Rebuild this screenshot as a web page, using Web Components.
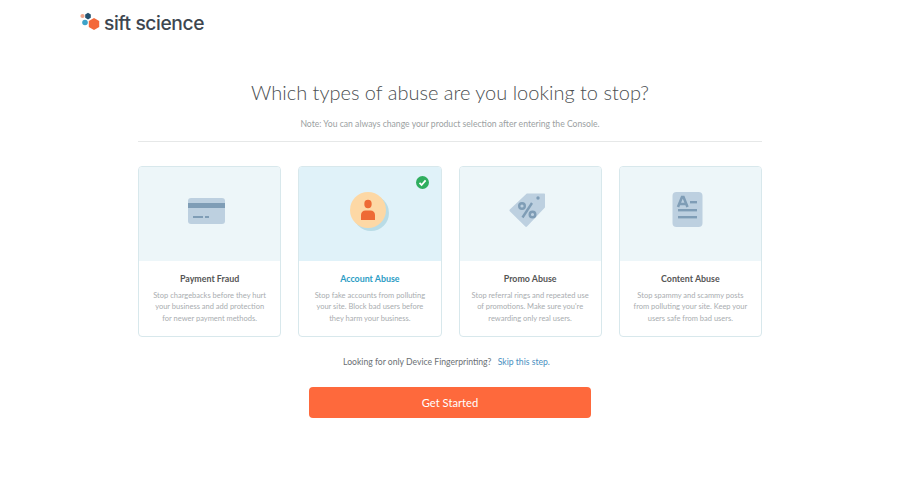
<!DOCTYPE html>
<html>
<head>
<meta charset="utf-8">
<title>Sift Science</title>
<style>
  html, body { margin: 0; background: #fff; }
  body { font-family: Lato, "Open Sans", sans-serif; height: 477px; overflow: hidden; }
</style>
</head>
<body>
<onboard-page>
  <sift-logo slot="logo"></sift-logo>
  <abuse-card title="Payment Fraud" slot="cards">
    <svg slot="icon" width="40" height="28" viewBox="0 0 40 28">
      <rect x="1" y="1" width="37" height="26" rx="3" fill="#bdd0e0"/>
      <rect x="1" y="6" width="37" height="5" fill="#7f9db6"/>
      <rect x="6" y="19" width="10" height="2" fill="#7f9db6"/>
      <rect x="18" y="19" width="4" height="2" fill="#7f9db6"/>
    </svg>
    Stop chargebacks before they hurt<br>your business and add protection<br>for newer payment methods.
  </abuse-card>
  <abuse-card title="Account Abuse" selected slot="cards">
    <svg slot="icon" width="46" height="46" viewBox="0 0 46 46">
      <circle cx="27" cy="25" r="18" fill="#b9dce6"/>
      <circle cx="24" cy="22" r="18" fill="#fdd8a5"/>
      <ellipse cx="24" cy="16" rx="3.700" ry="4.200" fill="#ee6a35"/>
      <path d="M17 32v-5c0-3 2-4.500 4.500-4.500h5c2.500 0 4.500 1.500 4.500 4.500v5z" fill="#ee6a35"/>
    </svg>
    Stop fake accounts from polluting<br>your site. Block bad users before<br>they harm your business.
  </abuse-card>
  <abuse-card title="Promo Abuse" slot="cards">
    <svg slot="icon" width="38" height="36" viewBox="0 0 38 36">
      <path d="M.8 16.500 17.500.8c.3-.2.500-.3.800-.3h17c.4 0 .7.300.7.700V14c0 .300-.1.500-.3.700L18 33.500c-.5.500-1.200.5-1.700 0L.8 18.200c-.5-.5-.5-1.200 0-1.700z" fill="#bdd0e0"/>
      <circle cx="29" cy="5" r="1.700" fill="#7f9db6"/>
      <circle cx="13" cy="13" r="2.800" fill="none" stroke="#7f9db6" stroke-width="2.400"/>
      <circle cx="23.500" cy="21.500" r="2.800" fill="none" stroke="#7f9db6" stroke-width="2.400"/>
      <path d="M23 10 13.500 24.500" stroke="#7f9db6" stroke-width="2.400"/>
    </svg>
    Stop referral rings and repeated use<br>of promotions. Make sure you're<br>rewarding only real users.
  </abuse-card>
  <abuse-card title="Content Abuse" slot="cards">
    <svg slot="icon" width="32" height="38" viewBox="0 0 32 38">
      <rect x="0.500" y="0" width="30" height="35" rx="4" fill="#bdd0e0"/>
      <path d="M6 15 10 5h1.500l4 10M7.500 12h6.500" fill="none" stroke="#7f9db6" stroke-width="2.600"/>
      <rect x="18" y="9" width="7" height="2.400" fill="#7f9db6"/>
      <rect x="6" y="17" width="19" height="2.400" fill="#7f9db6"/>
      <rect x="6" y="24" width="19" height="2.400" fill="#7f9db6"/>
    </svg>
    Stop spammy and scammy posts<br>from polluting your site. Keep your<br>users safe from bad users.
  </abuse-card>
</onboard-page>
<script>
class SiftLogo extends HTMLElement {
  constructor() {
    super();
    this.attachShadow({ mode: 'open' }).innerHTML = `
    <style>
      :host { display: flex; align-items: flex-start; gap: 3px; height: 21px; }
      span { font: 500 19.200px/21px Inter, Lato, sans-serif; color: #3d4650; letter-spacing: -0.4px; margin-top: 1px; }
    </style>
    <svg width="21" height="21" viewBox="0 0 21 21">
      <circle cx="2.500" cy="4" r="2.100" fill="#f0a58a"/>
      <path d="M5.200 2.400 8 .7l2.800 1.700v3.400L8 7.500 5.200 5.800z" fill="#24516f"/>
      <circle cx="5" cy="10.500" r="2.800" fill="#3ea3c9"/>
      <path d="M8.800 9 14 6l5.200 3v6L14 18l-5.200-3z" fill="#f4693a"/>
    </svg>
    <span>sift science</span>`;
  }
}
customElements.define('sift-logo', SiftLogo);

class AbuseCard extends HTMLElement {
  constructor() {
    super();
    this.attachShadow({ mode: 'open' }).innerHTML = `
    <style>
      :host { display: flex; flex-direction: column; flex: 1 1 0; height: 171px; box-sizing: border-box;
        border: 1px solid #d8e8ec; border-radius: 4px; overflow: hidden; background: #fff; position: relative; }
      .top { height: 94px; flex: none; box-sizing: border-box; padding: 0 5px 6px 0; background: #edf6f9;
        display: flex; align-items: center; justify-content: center; }
      :host([selected]) .top { background: #e0f2f9; }
      h3 { margin: 11px 0 0; font: 700 8.850px/14px Lato, sans-serif; color: #555; text-align: center; }
      :host([selected]) h3 { color: #2b9cc4; }
      p { margin: 4px 0 0; font: 400 7.500px/11.400px Lato, sans-serif; color: #a9adb0; text-align: center; }
      .check { display: none; position: absolute; top: 9px; right: 12px; }
      :host([selected]) .check { display: block; }
    </style>
    <div class="top"><slot name="icon"></slot></div>
    <h3></h3>
    <p><slot></slot></p>
    <svg class="check" width="13" height="13" viewBox="0 0 13 13">
      <circle cx="6.500" cy="6.500" r="6.500" fill="#2fae5f"/>
      <path d="M3.500 6.800 5.600 9l4-4.600" fill="none" stroke="#fff" stroke-width="1.800"/>
    </svg>`;
  }
  connectedCallback() {
    this.shadowRoot.querySelector('h3').textContent = this.getAttribute('title');
  }
}
customElements.define('abuse-card', AbuseCard);

class OnboardPage extends HTMLElement {
  constructor() {
    super();
    this.attachShadow({ mode: 'open' }).innerHTML = `
    <style>
      :host { display: block; }
      header { padding: 12px 0 0 80px; height: 21px; }
      main { width: 624px; margin: 0 auto; display: flex; flex-direction: column; align-items: center; }
      h1 { margin: 44px 0 0; font: 300 20px/30px Lato, sans-serif; color: #4b4f52; }
      .note { margin: 11px 0 0; font: 400 8.650px/12px Lato, sans-serif; color: #9b9fa2; }
      hr { align-self: stretch; margin: 11px 0 0; border: 0; border-top: 1px solid #e6e8e8; }
      .cards { align-self: stretch; display: flex; gap: 17px; margin-top: 24px; }
      .skip { margin: 19px 7px 0 0; font: 400 8.650px/12px Lato, sans-serif; color: #6a7074; }
      .skip a { color: #4a90bf; margin-left: 4px; text-decoration: none; }
      button { width: 282px; height: 31px; margin-top: 19px; border: 0; border-radius: 4px; background: #fe693c;
        color: #fff; font: 400 11.200px/31px Lato, sans-serif; padding: 0; }
    </style>
    <header><slot name="logo"></slot></header>
    <main>
      <h1>Which types of abuse are you looking to stop?</h1>
      <div class="note">Note: You can always change your product selection after entering the Console.</div>
      <hr>
      <div class="cards"><slot name="cards"></slot></div>
      <div class="skip">Looking for only Device Fingerprinting? <a href="#">Skip this step.</a></div>
      <button>Get Started</button>
    </main>`;
  }
}
customElements.define('onboard-page', OnboardPage);
</script>
</body>
</html>
